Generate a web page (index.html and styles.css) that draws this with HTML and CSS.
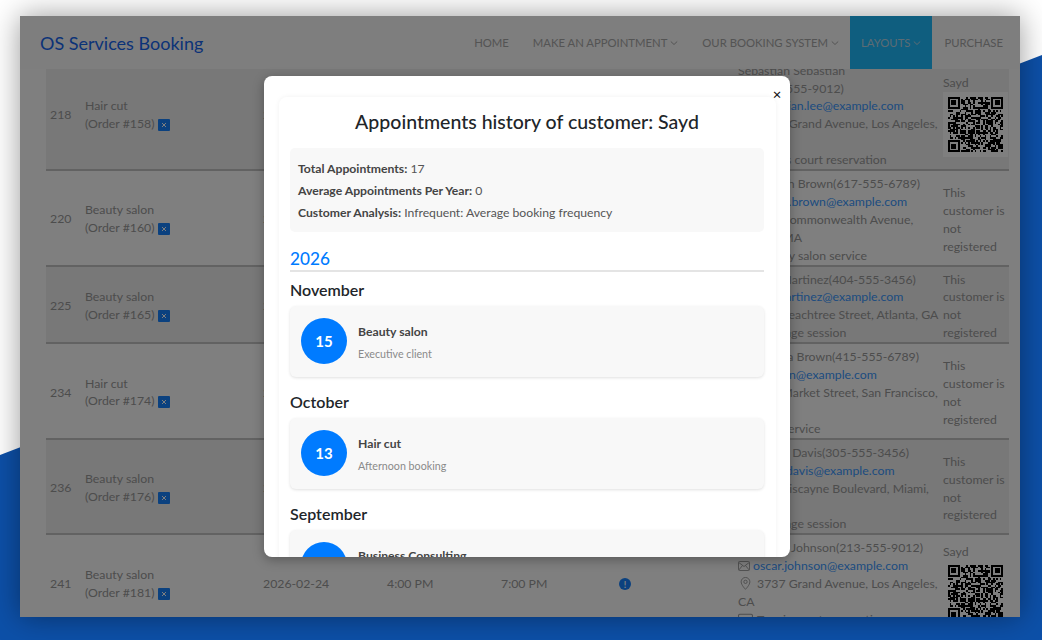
FILE: index.html
```html
<!DOCTYPE html>
<html lang="en">
<head>
<meta charset="utf-8">
<title>OS Services Booking</title>
<link rel="stylesheet" href="styles.css">
</head>
<body>
<svg class="defs" width="0" height="0" aria-hidden="true">
  <symbol id="i-user" viewBox="0 0 16 16"><circle cx="8" cy="5" r="3" fill="none" stroke="currentColor" stroke-width="1.2"/><path d="M2.5 14c.5-3.5 3-5 5.500-5s5 1.500 5.500 5z" fill="none" stroke="currentColor" stroke-width="1.2"/></symbol>
  <symbol id="i-mail" viewBox="0 0 12 10"><rect x=".5" y=".5" width="11" height="9" rx="1" fill="none" stroke="currentColor" stroke-width=".9"/><path d="M.8 1.500L6 5.500l5.200-4M.8 9l3.700-4.500M11.200 9L7.500 4.500" fill="none" stroke="currentColor" stroke-width=".9"/></symbol>
  <symbol id="i-pin" viewBox="0 0 12 14"><path d="M6 13.300S1.300 8.600 1.300 5.200a4.700 4.700 0 0 1 9.400 0C10.700 8.600 6 13.300 6 13.300z" fill="none" stroke="currentColor" stroke-width="1"/><circle cx="6" cy="5.200" r="1.800" fill="none" stroke="currentColor" stroke-width="1"/></symbol>
  <symbol id="i-note" viewBox="0 0 13 10"><rect x=".5" y=".5" width="12" height="9" rx="1" fill="none" stroke="currentColor" stroke-width=".9"/><path d="M.5 3.500h12" stroke="currentColor" stroke-width=".9"/></symbol>
  <symbol id="i-x" viewBox="0 0 12 12"><rect width="12" height="12" rx="1" fill="currentColor"/><path d="M4 4l4 4M8 4l-4 4" stroke="#fff" stroke-width="1"/></symbol>
  <symbol id="i-chev" viewBox="0 0 8 8"><path d="M.8 2.500l3.200 3 3.200-3" fill="none" stroke="currentColor" stroke-width="1"/></symbol>
  <symbol id="i-qr" viewBox="0 0 33 33"><path class="qr-path" fill="#000"/></symbol>
</svg>

<div class="window">
  <nav class="navbar">
    <a class="brand">OS Services Booking</a>
    <ul class="menu">
      <li class="menu-item">HOME</li>
      <li class="menu-item">MAKE AN APPOINTMENT <svg class="chev"><use href="#i-chev"/></svg></li>
      <li class="menu-item">OUR BOOKING SYSTEM <svg class="chev"><use href="#i-chev"/></svg></li>
      <li class="menu-item active">LAYOUTS <svg class="chev"><use href="#i-chev"/></svg></li>
      <li class="menu-item">PURCHASE</li>
    </ul>
  </nav>

  <div class="table-view">
    <table class="orders">
      <colgroup>
        <col class="c-id"><col class="c-svc"><col class="c-date"><col class="c-time"><col class="c-time2"><col class="c-stat"><col class="c-cust"><col class="c-last">
      </colgroup>
      <tr class="striped">
        <td>218</td>
        <td>Hair cut<br>(Order #158) <svg class="x-badge"><use href="#i-x"/></svg></td>
        <td>2026-02-10</td><td>4:00 PM</td><td>7:00 PM</td><td></td>
        <td class="cust">Sebastian Sebastian<br>Lee(213-555-9012)<br><svg class="ico-mail"><use href="#i-mail"/></svg><a class="mail">sebastian.lee@example.com</a><br><svg class="ico"><use href="#i-pin"/></svg>3737 Grand Avenue, Los Angeles,<br>CA<br><svg class="ico"><use href="#i-note"/></svg>Tennis court reservation</td>
        <td class="reg">Sayd<div class="qr-box"><svg class="qr"><use href="#i-qr"/></svg></div></td>
      </tr>
      <tr>
        <td>220</td>
        <td>Beauty salon<br>(Order #160) <svg class="x-badge"><use href="#i-x"/></svg></td>
        <td>2026-02-12</td><td>4:00 PM</td><td>7:00 PM</td><td></td>
        <td class="cust"><svg class="ico"><use href="#i-user"/></svg>Joseph Brown(617-555-6789)<br><svg class="ico-mail"><use href="#i-mail"/></svg><a class="mail">joseph.brown@example.com</a><br><svg class="ico"><use href="#i-pin"/></svg>900 Commonwealth Avenue,<br>Boston, MA<br><svg class="ico"><use href="#i-note"/></svg>Beauty salon service</td>
        <td class="reg">This customer is not registered</td>
      </tr>
      <tr class="striped">
        <td>225</td>
        <td>Beauty salon<br>(Order #165) <svg class="x-badge"><use href="#i-x"/></svg></td>
        <td>2026-02-15</td><td>4:00 PM</td><td>7:00 PM</td><td></td>
        <td class="cust"><svg class="ico"><use href="#i-user"/></svg>Mia Martinez(404-555-3456)<br><svg class="ico-mail"><use href="#i-mail"/></svg><a class="mail">mia.martinez@example.com</a><br><svg class="ico"><use href="#i-pin"/></svg>456 Peachtree Street, Atlanta, GA<br><svg class="ico"><use href="#i-note"/></svg>Massage session</td>
        <td class="reg">This customer is not registered</td>
      </tr>
      <tr>
        <td>234</td>
        <td>Hair cut<br>(Order #174) <svg class="x-badge"><use href="#i-x"/></svg></td>
        <td>2026-02-18</td><td>4:00 PM</td><td>7:00 PM</td><td></td>
        <td class="cust"><svg class="ico"><use href="#i-user"/></svg>Sophia Brown(415-555-6789)<br><svg class="ico-mail"><use href="#i-mail"/></svg><a class="mail">s.brown@example.com</a><br><svg class="ico"><use href="#i-pin"/></svg>120 Market Street, San Francisco,<br>CA<br><svg class="ico"><use href="#i-note"/></svg>Hair service</td>
        <td class="reg">This customer is not registered</td>
      </tr>
      <tr class="striped">
        <td>236</td>
        <td>Beauty salon<br>(Order #176) <svg class="x-badge"><use href="#i-x"/></svg></td>
        <td>2026-02-20</td><td>4:00 PM</td><td>7:00 PM</td><td></td>
        <td class="cust"><svg class="ico"><use href="#i-user"/></svg>Violet Davis(305-555-3456)<br><svg class="ico-mail"><use href="#i-mail"/></svg><a class="mail">violet.davis@example.com</a><br><svg class="ico"><use href="#i-pin"/></svg>800 Biscayne Boulevard, Miami,<br>FL<br><svg class="ico"><use href="#i-note"/></svg>Massage session</td>
        <td class="reg">This customer is not registered</td>
      </tr>
      <tr>
        <td>241</td>
        <td>Beauty salon<br>(Order #181) <svg class="x-badge"><use href="#i-x"/></svg></td>
        <td>2026-02-24</td><td>4:00 PM</td><td>7:00 PM</td>
        <td class="status"><span class="alert">!</span></td>
        <td class="cust"><svg class="ico"><use href="#i-user"/></svg>Oscar Johnson(213-555-9012)<br><svg class="ico-mail"><use href="#i-mail"/></svg><a class="mail">oscar.johnson@example.com</a><br><svg class="ico"><use href="#i-pin"/></svg>3737 Grand Avenue, Los Angeles,<br>CA<br><svg class="ico"><use href="#i-note"/></svg>Tennis court reservation</td>
        <td class="reg">Sayd<div class="qr-box"><svg class="qr"><use href="#i-qr"/></svg></div></td>
      </tr>
    </table>
  </div>

  <div class="overlay">
    <div class="modal">
      <button class="close" type="button">×</button>
      <div class="panel">
        <h2 class="title">Appointments history of customer: Sayd</h2>
        <div class="stats">
          <p><b>Total Appointments:</b> 17</p>
          <p><b>Average Appointments Per Year:</b> 0</p>
          <p><b>Customer Analysis:</b> Infrequent: Average booking frequency</p>
        </div>
        <h3 class="year">2026</h3>
        <h4 class="month">November</h4>
        <div class="card">
          <span class="day">15</span>
          <div class="info"><div class="svc">Beauty salon</div><div class="note">Executive client</div></div>
        </div>
        <h4 class="month">October</h4>
        <div class="card">
          <span class="day">13</span>
          <div class="info"><div class="svc">Hair cut</div><div class="note">Afternoon booking</div></div>
        </div>
        <h4 class="month">September</h4>
        <div class="card">
          <span class="day">8</span>
          <div class="info"><div class="svc">Business Consulting</div><div class="note">Morning session</div></div>
        </div>
      </div>
    </div>
  </div>
</div>
<script src="qr.js"></script>
</body>
</html>
```
FILE: styles.css
```css
* { box-sizing: border-box; }
html, body { height: 100%; }
body {
  margin: 0;
  padding: 16px 22px 23px 20px;
  background: #fff;
  font-family: Lato, "Noto Sans", sans-serif;
  overflow: hidden;
  position: relative;
}
body::before {
  content: "";
  position: absolute;
  inset: 0;
  background: #0d50a8;
  clip-path: polygon(0 455px, 1042px 55px, 1042px 640px, 0 640px);
}
.defs { position: absolute; }
.window {
  position: relative;
  height: 601px;
  background: #fff;
  box-shadow: 0 0 28px rgba(0, 0, 0, .4);
  overflow: hidden;
  display: flex;
  flex-direction: column;
}
.navbar {
  flex: none;
  height: 53px;
  display: flex;
  align-items: center;
  justify-content: space-between;
  padding-left: 20px;
  background: #fcfcfc;
  position: relative;
  z-index: 1;
}
.brand { font-size: 18px; color: #1766f0; }
.menu {
  display: flex;
  align-self: stretch;
  margin: 0;
  padding: 0 5px 0 0;
  list-style: none;
}
.menu-item {
  display: flex;
  align-items: center;
  gap: 3px;
  padding: 0 12px;
  font-size: 11.300px;
  color: #a8a8a8;
  white-space: nowrap;
}
.menu-item.active { background: #1ebcff; color: #b8d8e8; padding: 0 11px; margin-left: -1px; }
.chev { width: 8px; height: 8px; }
.table-view { flex: 1; overflow: hidden; padding: 0 11px 0 26px; }
.orders {
  width: 963px;
  margin-top: -11.400px;
  table-layout: fixed;
  border-collapse: collapse;
  font-size: 12.300px;
  line-height: 17.900px;
  color: #9a9a9a;
}
.c-id { width: 35px; }
.c-svc { width: 178px; }
.c-date { width: 124px; }
.c-time { width: 114px; }
.c-time2 { width: 116px; }
.c-stat { width: 121px; }
.c-cust { width: 205px; }
.c-last { width: 70px; }
.orders td {
  padding: 3.500px 4px .5px;
  vertical-align: middle;
  border-bottom: 2px solid #c4c4c4;
}
.orders .cust { white-space: nowrap; padding: 4px 0 0 4px; }
.orders .reg { padding: 4px 0 0 4px; }
.striped { background: #f0f0f0; }
.mail { color: #3a98ff; }
.ico { width: 15px; height: 13px; margin-right: 4px; vertical-align: -2px; }
.ico-mail { width: 12px; height: 10px; margin-right: 3px; vertical-align: -1px; }
.x-badge { width: 12px; height: 12px; color: #1682ff; vertical-align: -3px; }
.orders .status { padding-left: 6px; }
.alert {
  display: inline-flex;
  align-items: center;
  justify-content: center;
  width: 12px;
  height: 12px;
  border-radius: 50%;
  background: #1682ff;
  color: #fff;
  font-size: 9px;
  font-weight: 700;
  line-height: 1;
}
.qr-box { width: 65px; height: 65px; padding: 5px; background: #fff; }
.qr { display: block; width: 55px; height: 55px; shape-rendering: crispEdges; }

.overlay {
  position: absolute;
  inset: 0;
  z-index: 2;
  padding: 60px 230px 60px 244px;
  background: rgba(0, 0, 0, .5);
}
.modal {
  position: relative;
  height: 100%;
  padding: 21px 14px 0 15px;
  background: #fff;
  border-radius: 8px;
  box-shadow: 0 3px 12px rgba(0, 0, 0, .3);
  overflow: hidden;
}
.close {
  position: absolute;
  top: 9px;
  right: 6px;
  width: 14px;
  height: 18px;
  padding: 0;
  border: 0;
  background: none;
  color: #111;
  font: 15px/18px "Noto Sans", sans-serif;
}
.panel {
  padding: 0 12px 0 11px;
  border-radius: 8px;
  box-shadow: 0 0 5px rgba(0, 0, 0, .06);
  color: #212529;
}
.title {
  margin: 0;
  padding-top: 10px;
  height: 51px;
  text-align: center;
  font-size: 19.500px;
  line-height: 30px;
  font-weight: 500;
}
.stats {
  height: 84px;
  padding: 10px 8px;
  background: #f8f8f8;
  border-radius: 5px;
  font-size: 12.200px;
  line-height: 22px;
  color: #555;
}
.stats p { margin: 0; }
.stats b { font-weight: 700; color: #444; }
.year {
  margin: 14px 0 0;
  height: 26px;
  border-bottom: 2px solid #e4e4e4;
  font-size: 17.200px;
  line-height: 25px;
  font-weight: 500;
  color: #007bff;
}
.month {
  margin: 8px 0 6px;
  height: 20px;
  font-size: 16px;
  line-height: 20px;
  font-weight: 600;
}
.card {
  display: flex;
  align-items: center;
  gap: 11px;
  height: 71px;
  margin-bottom: 15px;
  padding: 0 11px 1px;
  background: #f8f8f8;
  border-radius: 6px;
  box-shadow: 0 1px 3px rgba(0, 0, 0, .12);
}
.day {
  flex: none;
  display: flex;
  align-items: center;
  justify-content: center;
  width: 46px;
  height: 46px;
  border-radius: 50%;
  background: #007bff;
  color: #fff;
  font-size: 15px;
  font-weight: 700;
}
.info { padding-top: 3px; }
.svc { font-size: 12.200px; line-height: 22px; font-weight: 700; color: #444; }
.note { font-size: 10.700px; line-height: 22px; color: #8a8a8a; }
```
FILE: qr.js
```js
// Draws the placeholder QR matrix used by the customer column.
(function () {
  var size = 33, seed = 20260224, d = "";
  function rnd() { seed = (seed * 1664525 + 1013904223) >>> 0; return (seed >>> 16) & 1; }
  function inFinder(x, y, fx, fy) { return x >= fx - 1 && x <= fx + 7 && y >= fy - 1 && y <= fy + 7; }
  function finderBit(x, y, fx, fy) {
    var a = x - fx, b = y - fy;
    if (a < 0 || b < 0 || a > 6 || b > 6) return false;
    return a === 0 || b === 0 || a === 6 || b === 6 || (a >= 2 && a <= 4 && b >= 2 && b <= 4);
  }
  var fs = [[0, 0], [size - 7, 0], [0, size - 7]];
  for (var y = 0; y < size; y++) {
    for (var x = 0; x < size; x++) {
      var on = rnd() === 1;
      fs.forEach(function (f) {
        if (inFinder(x, y, f[0], f[1])) { on = finderBit(x, y, f[0], f[1]); }
      });
      if (on) d += "M" + x + " " + y + "h1v1h-1z";
    }
  }
  document.querySelector(".qr-path").setAttribute("d", d);
})();
```
